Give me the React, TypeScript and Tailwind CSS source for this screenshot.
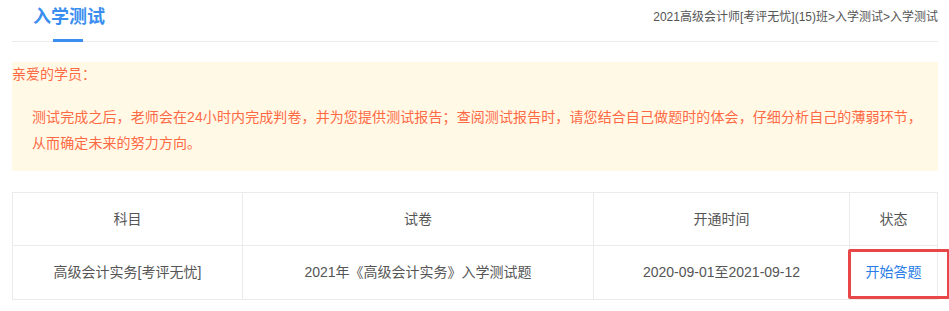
import React from "react";

const font = { fontFamily: '"Liberation Sans", "Noto Sans CJK SC", sans-serif' };

export default function App() {
  return (
    <div className="w-[949px] h-[311px] bg-white overflow-hidden" style={font}>
      <div className="mx-[12px] w-[926px]">
        {/* header */}
        <div className="relative flex items-start justify-between h-[42px] border-b border-[#ebebeb]">
          <div className="relative ml-[21px] h-full">
            <div className="text-[18px] leading-[22px] pt-[6px] font-bold text-[#3a8ef0]">入学测试</div>
            <div className="absolute left-[20px] bottom-[-1px] w-[30px] h-[3px] bg-[#3a8ef0]" />
          </div>
          <div className="text-[12px] leading-[16px] pt-[9px] text-[#555]">
            2021高级会计师[考评无忧](15)班&gt;入学测试&gt;入学测试
          </div>
        </div>

        {/* notice */}
        <div className="mt-[20px] h-[109px] bg-[#fff9e5] text-[#ff6a45] text-[14px]">
          <div className="pt-[4px] leading-[16px]">亲爱的学员：</div>
          <div className="pl-[20px] pt-[22px] leading-[26px] pr-[10px] tracking-[0.1px]">
            测试完成之后，老师会在24小时内完成判卷，并为您提供测试报告；查阅测试报告时，请您结合自己做题时的体会，仔细分析自己的薄弱环节，从而确定未来的努力方向。
          </div>
        </div>

        {/* table */}
        <div className="mt-[21px] border border-[#ebebeb] text-[14px] text-[#555]">
          <div className="grid grid-cols-[230px_351px_256px_1fr] h-[53px] border-b border-[#ebebeb]">
            <div className="flex items-center justify-center border-r border-[#ebebeb]">科目</div>
            <div className="flex items-center justify-center border-r border-[#ebebeb]">试卷</div>
            <div className="flex items-center justify-center border-r border-[#ebebeb]">开通时间</div>
            <div className="flex items-center justify-center">状态</div>
          </div>
          <div className="grid grid-cols-[230px_351px_256px_1fr] h-[53px]">
            <div className="flex items-center justify-center border-r border-[#ebebeb]">高级会计实务[考评无忧]</div>
            <div className="flex items-center justify-center border-r border-[#ebebeb]">2021年《高级会计实务》入学测试题</div>
            <div className="flex items-center justify-center border-r border-[#ebebeb]">2020-09-01至2021-09-12</div>
            <div className="relative flex items-center justify-center">
              <span className="text-[#2a7de8]">开始答题</span>
              <div className="absolute left-[-2px] top-[3px] w-[102px] h-[50px] border-[3px] border-[#e8474a] rounded-[2px]" />
            </div>
          </div>
        </div>
      </div>
    </div>
  );
}
